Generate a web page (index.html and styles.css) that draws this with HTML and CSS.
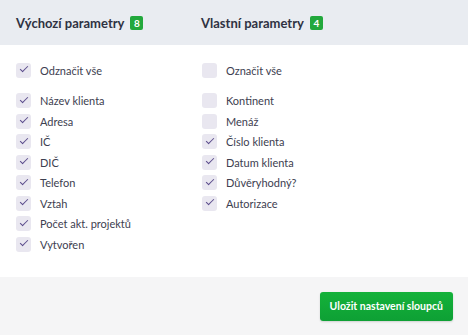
FILE: index.html
```html
<!DOCTYPE html>
<html lang="cs">
<head>
    <meta charset="UTF-8">
    <title>Nastavení sloupců</title>
    <link rel="stylesheet" href="styles.css">
</head>
<body>

<div class="panel">
    <div class="panel-head">
        <h3 class="col-title">Výchozí parametry <span class="badge">8</span></h3>
        <h3 class="col-title">Vlastní parametry <span class="badge">4</span></h3>
    </div>

    <div class="panel-body">
        <!-- výchozí -->
        <div class="column">
            <label class="check all"><span class="box on"></span>Odznačit vše</label>
            <label class="check"><span class="box on"></span>Název klienta</label>
            <label class="check"><span class="box on"></span>Adresa</label>
            <label class="check"><span class="box on"></span>IČ</label>
            <label class="check"><span class="box on"></span>DIČ</label>
            <label class="check"><span class="box on"></span>Telefon</label>
            <label class="check"><span class="box on"></span>Vztah</label>
            <label class="check"><span class="box on"></span>Počet akt. projektů</label>
            <label class="check"><span class="box on"></span>Vytvořen</label>
        </div>
        <!-- vlastní -->
        <div class="column">
            <label class="check all"><span class="box"></span>Označit vše</label>
            <label class="check"><span class="box"></span>Kontinent</label>
            <label class="check"><span class="box"></span>Menáž</label>
            <label class="check"><span class="box on"></span>Číslo klienta</label>
            <label class="check"><span class="box on"></span>Datum klienta</label>
            <label class="check"><span class="box on"></span>Důvěryhodný?</label>
            <label class="check"><span class="box on"></span>Autorizace</label>
        </div>
    </div>

    <div class="panel-foot">
        <button class="btn-save">Uložit nastavení sloupců</button>
    </div>
</div>

</body>
</html>
```

FILE: styles.css
```css
body {
    margin: 0;
    font-family: Lato, "Open Sans", sans-serif;
    color: #3a3d4a;
    background-color: #ffffff;
}
.panel {
    width: 468px;
    height: 335px;
    display: flex;
    flex-direction: column;
}
.panel-head {
    display: grid;
    grid-template-columns: 185px 1fr;
    height: 45px;
    padding: 0 16px;
    align-items: center;
    background-color: #e9ecf1;
}
.col-title {
    margin: 0;
    font-size: 13px;
    font-weight: bold;
    color: #2f3242;
    display: flex;
    align-items: center;
    gap: 6px;
}
.badge {
    display: inline-flex;
    align-items: center;
    justify-content: center;
    width: 13px;
    height: 14px;
    border-radius: 2px;
    background-color: #22a83c;
    color: #fff;
    font-size: 10px;
    font-weight: bold;
}
.panel-body {
    flex: 1;
    display: grid;
    grid-template-columns: 186px 1fr;
    padding: 15px 16px 0;
}
.column {
    display: flex;
    flex-direction: column;
}
.check {
    display: flex;
    align-items: center;
    gap: 9px;
    height: 20.5px;
    font-size: 11px;
    color: #3d4050;
}
.check.all {
    margin-bottom: 10px;
}
.box {
    width: 15px;
    height: 15px;
    border-radius: 3px;
    background-color: #e9e7f0;
    position: relative;
}
.box.on::after {
    content: "";
    position: absolute;
    left: 4px;
    top: 3.5px;
    width: 7px;
    height: 3px;
    border-left: 1.2px solid #5a4b8b;
    border-bottom: 1.2px solid #5a4b8b;
    transform: rotate(-45deg);
}
.panel-foot {
    height: 58px;
    display: flex;
    justify-content: flex-end;
    align-items: center;
    padding: 0 15px;
    background-color: #f5f5f6;
}
.btn-save {
    height: 29px;
    padding: 0 10px;
    border: none;
    border-radius: 3px;
    background: linear-gradient(#14b23a, #0ea035);
    color: #fff;
    font-family: Lato, "Open Sans", sans-serif;
    font-size: 10.5px;
    font-weight: bold;
    box-shadow: 0 1px 2px rgba(0, 0, 0, 0.15);
    cursor: pointer;
}
```
